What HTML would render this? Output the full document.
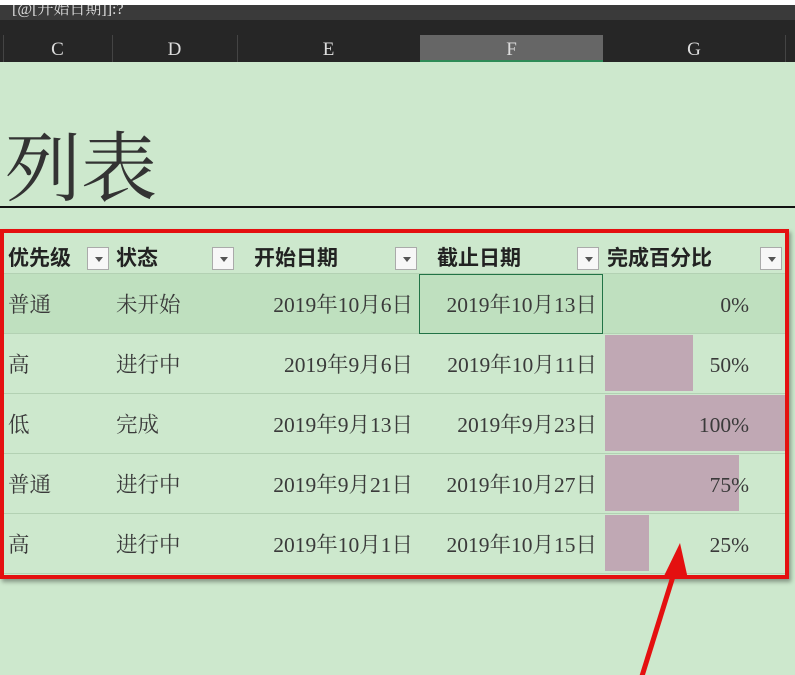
<!DOCTYPE html>
<html><head><meta charset="utf-8"><style>
*{margin:0;padding:0;box-sizing:border-box}
body{width:795px;height:675px;overflow:hidden;background:#cde8cd;position:relative;font-family:"Liberation Serif","Noto Serif CJK SC",serif;color:#333}
.a{position:absolute}
.t{font-size:21.5px;line-height:62px;white-space:nowrap;color:#3a3a3a}
.h{font-family:"Liberation Sans","Noto Sans CJK SC",sans-serif;font-weight:bold;font-size:21px;color:#222;line-height:35px}
.fb{position:absolute;width:22px;height:23px;background:#f7f7f7;border:1px solid #aaa;top:247px}
.fb:after{content:"";position:absolute;left:7px;top:9px;border:4px solid transparent;border-top:5px solid #555}
.col{position:absolute;top:35px;height:27px;color:#ddd;font-size:19px;text-align:center;line-height:29px}
.sep{position:absolute;top:35px;height:27px;width:1px;background:#444}
.bar{position:absolute;left:605px;height:56px;background:#c0a8b4}
.ln{position:absolute;left:0;width:787px;height:1px;background:#b3d1b3}
</style></head><body>
<div class="a" style="left:0;top:0;width:795px;height:5px;background:#fff"></div>
<div class="a" style="left:0;top:5px;width:795px;height:15px;background:#3a3a3a;color:#ddd;font-size:16px;line-height:10px;padding-left:12px;overflow:hidden">[@[开始日期]]:?</div>
<div class="a" style="left:0;top:20px;width:795px;height:42px;background:#262626"></div>
<div class="a" style="left:420px;top:35px;width:183px;height:27px;background:#666;border-bottom:2px solid #2e8b57"></div>
<div class="sep" style="left:3px"></div><div class="sep" style="left:112px"></div><div class="sep" style="left:237px"></div><div class="sep" style="left:785px"></div>
<div class="col" style="left:3px;width:109px">C</div>
<div class="col" style="left:112px;width:125px">D</div>
<div class="col" style="left:237px;width:183px">E</div>
<div class="col" style="left:420px;width:183px">F</div>
<div class="col" style="left:603px;width:182px">G</div>
<div class="a" style="left:5px;top:120px;font-size:76px;line-height:86px;color:#333;font-family:'Noto Serif CJK SC',serif">列表</div>
<div class="a" style="left:0;top:206px;width:795px;height:2px;background:#111"></div>
<div class="a" style="left:0;top:274px;width:787px;height:59px;background:#bfe0bf"></div>
<div class="bar" style="top:335px;width:88px"></div>
<div class="bar" style="top:395px;width:180px"></div>
<div class="bar" style="top:455px;width:134px"></div>
<div class="bar" style="top:515px;width:44px"></div>
<div class="ln" style="top:273px"></div><div class="ln" style="top:333px"></div><div class="ln" style="top:393px"></div><div class="ln" style="top:453px"></div><div class="ln" style="top:513px"></div><div class="ln" style="top:573px"></div>
<div class="a" style="left:419px;top:274px;width:184px;height:60px;border:1px solid #217346"></div>
<div class="a h" style="left:8px;top:241px">优先级</div>
<div class="a h" style="left:116px;top:241px">状态</div>
<div class="a h" style="left:254px;top:241px">开始日期</div>
<div class="a h" style="left:437px;top:241px">截止日期</div>
<div class="a h" style="left:607px;top:241px">完成百分比</div>
<div class="fb" style="left:87px"></div><div class="fb" style="left:212px"></div><div class="fb" style="left:395px"></div><div class="fb" style="left:577px"></div><div class="fb" style="left:760px"></div>
<div class="a" style="left:0;top:274px;width:795px">
<div style="position:relative;height:60px" class="t"><span class="a" style="left:8px">普通</span><span class="a" style="left:116px">未开始</span><span class="a" style="right:382px">2019年10月6日</span><span class="a" style="right:198px">2019年10月13日</span><span class="a" style="right:46px">0%</span></div>
<div style="position:relative;height:60px" class="t"><span class="a" style="left:8px">高</span><span class="a" style="left:116px">进行中</span><span class="a" style="right:382px">2019年9月6日</span><span class="a" style="right:198px">2019年10月11日</span><span class="a" style="right:46px">50%</span></div>
<div style="position:relative;height:60px" class="t"><span class="a" style="left:8px">低</span><span class="a" style="left:116px">完成</span><span class="a" style="right:382px">2019年9月13日</span><span class="a" style="right:198px">2019年9月23日</span><span class="a" style="right:46px">100%</span></div>
<div style="position:relative;height:60px" class="t"><span class="a" style="left:8px">普通</span><span class="a" style="left:116px">进行中</span><span class="a" style="right:382px">2019年9月21日</span><span class="a" style="right:198px">2019年10月27日</span><span class="a" style="right:46px">75%</span></div>
<div style="position:relative;height:60px" class="t"><span class="a" style="left:8px">高</span><span class="a" style="left:116px">进行中</span><span class="a" style="right:382px">2019年10月1日</span><span class="a" style="right:198px">2019年10月15日</span><span class="a" style="right:46px">25%</span></div>
</div>
<div class="a" style="left:0;top:229px;width:789px;height:350px;border:4px solid #e41010;box-shadow:2px 3px 4px rgba(0,0,0,.35)"></div>
<svg class="a" style="left:0;top:0" width="795" height="675"><line x1="642" y1="676" x2="675" y2="570" stroke="#e41010" stroke-width="5"/><polygon points="680,543 663,578 688,579" fill="#e41010"/></svg>
</body></html>
